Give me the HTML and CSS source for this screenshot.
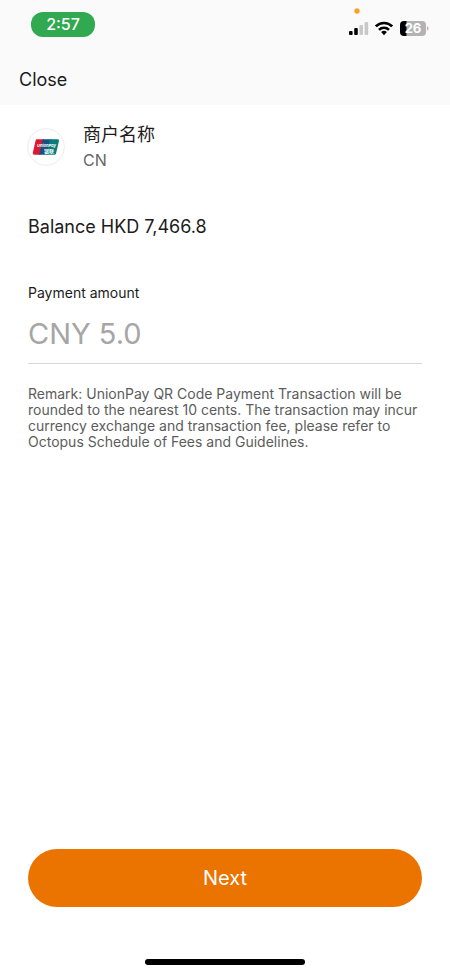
FILE: index.html
```html
<!DOCTYPE html>
<html lang="en">
<head>
<meta charset="utf-8">
<meta name="viewport" content="width=device-width, initial-scale=1">
<title>Payment</title>
<link rel="stylesheet" href="styles.css">
</head>
<body>
<div class="screen">
  <header class="top">
    <div class="status">
      <span class="time">2:57</span>
      <svg class="indicators" width="82" height="32" viewBox="0 0 82 32" aria-hidden="true">
        <circle cx="9" cy="6" r="2.7" fill="#f7a12b"/>
        <rect x="1" y="26" width="3.6" height="4" rx="1"/>
        <rect x="6.2" y="23" width="3.6" height="7" rx="1"/>
        <rect x="11.4" y="20" width="3.6" height="10" rx="1" fill="#c8c8c8"/>
        <rect x="16.6" y="17" width="3.6" height="13" rx="1" fill="#c8c8c8"/>
        <path d="M27.8 21.4a11.6 11.6 0 0 1 16.4 0" fill="none" stroke="#000" stroke-width="2.7"/>
        <path d="M31 24.8a7 7 0 0 1 10 0" fill="none" stroke="#000" stroke-width="2.6"/>
        <path d="M33.1 27.1a4.1 4.1 0 0 1 5.8 0L36 30.2z"/>
        <path d="M56 16h18a4 4 0 0 1 4 4v7a4 4 0 0 1-4 4H56z" fill="#b3b3b3"/>
        <path d="M58.500 16H56a4 4 0 0 0-4 4v7a4 4 0 0 0 4 4h2.500z"/>
        <path d="M79 21.300c2 .5 2 3.900 0 4.400z" fill="#b3b3b3"/>
        <text class="charge" x="65" y="28" text-anchor="middle">26</text>
      </svg>
    </div>
    <button class="close" type="button">Close</button>
  </header>
  <main class="content">
    <section class="merchant">
      <svg class="logo" width="38" height="38" viewBox="0 0 38 38" role="img" aria-label="UnionPay">
        <circle cx="19" cy="19" r="18.300" fill="#fff" stroke="#ececec"/>
        <path d="M9.500 11.300h7.500l-3.600 15.400H7.300q-1.900 0-1.500-1.900l2.700-11.800q.3-1.700 1-1.700z" fill="#dc1932"/>
        <path d="M15.700 11.300h9l-3.600 15.400h-9z" fill="#174f80"/>
        <path d="M22.700 11.300h8.100q1.500 0 1.200 1.500l-2.900 12.400q-.4 1.500-1.900 1.500h-8.100z" fill="#087d7b"/>
        <text class="logo-name" x="19.500" y="18.600" text-anchor="middle">UnionPay</text>
        <text class="logo-cn" x="22" y="24.500" text-anchor="middle">银联</text>
      </svg>
      <div>
        <h1 class="name">商户名称</h1>
        <p class="country">CN</p>
      </div>
    </section>
    <p class="balance">Balance HKD 7,466.8</p>
    <label class="label" for="amount">Payment amount</label>
    <input class="amount" id="amount" type="text" inputmode="decimal" placeholder="CNY 5.0">
    <p class="remark">Remark: UnionPay QR Code Payment Transaction will be rounded to the nearest 10 cents. The transaction may incur currency exchange and transaction fee, please refer to Octopus Schedule of Fees and Guidelines.</p>
  </main>
  <footer class="bottom">
    <button class="next" type="button">Next</button>
    <div class="home"></div>
  </footer>
</div>
</body>
</html>
```
FILE: styles.css
```css
* { box-sizing: border-box; }
body, h1, p { margin: 0; }
body {
  background: #fff;
  color: #1c1c1c;
  font-family: Inter, "Noto Sans CJK SC", sans-serif;
}
button, input { font: inherit; border: 0; padding: 0; }
.screen {
  display: flex;
  flex-direction: column;
  min-height: 100vh;
}
.top {
  background: #fafafa;
  padding: 5px 20px 11px 19px;
}
.status {
  display: flex;
  align-items: flex-start;
  justify-content: space-between;
  padding-left: 12px;
}
.time {
  width: 64px;
  margin-top: 7px;
  border-radius: 12px;
  background: #30a950;
  color: #fff;
  font-size: 16px;
  font-weight: 500;
  line-height: 25px;
  text-align: center;
}
.charge {
  fill: #fff;
  font-size: 13px;
  font-weight: 700;
}
.close {
  display: block;
  margin-top: 29px;
  background: none;
  color: #1c1c1c;
  font-size: 18px;
  line-height: 28px;
}
.content {
  flex: 1;
  padding: 17px 28px;
}
.merchant {
  display: flex;
  align-items: center;
  gap: 18px;
}
.logo { margin-left: -1px; }
.logo-name {
  fill: #fff;
  font-size: 4px;
  font-style: italic;
  font-weight: 700;
}
.logo-cn {
  fill: #fff;
  font-size: 5px;
  font-weight: 700;
}
.name {
  font-size: 18px;
  font-weight: 400;
  line-height: 26px;
}
.country {
  color: #666;
  font-size: 16px;
  line-height: 24px;
}
.balance {
  margin-top: 44px;
  font-size: 18px;
  line-height: 22px;
}
.label {
  display: block;
  margin-top: 44px;
  font-size: 14px;
  line-height: 22px;
}
.amount {
  display: block;
  width: 100%;
  height: 60px;
  border-bottom: 1px solid #d8d8d8;
  background: none;
  color: #1c1c1c;
  font-size: 29px;
  outline: 0;
}
.amount::placeholder {
  color: #a6a6a6;
  opacity: 1;
}
.remark {
  margin-top: 22px;
  color: #5c5c5c;
  font-size: 14px;
  line-height: 16px;
}
.bottom { padding: 0 28px 9px; }
.next {
  display: block;
  width: 100%;
  height: 58px;
  border-radius: 29px;
  background: #eb7300;
  color: #fff;
  font-size: 20px;
}
.home {
  width: 160px;
  height: 6px;
  margin: 52px auto 0;
  border-radius: 3px;
  background: #000;
}
```
